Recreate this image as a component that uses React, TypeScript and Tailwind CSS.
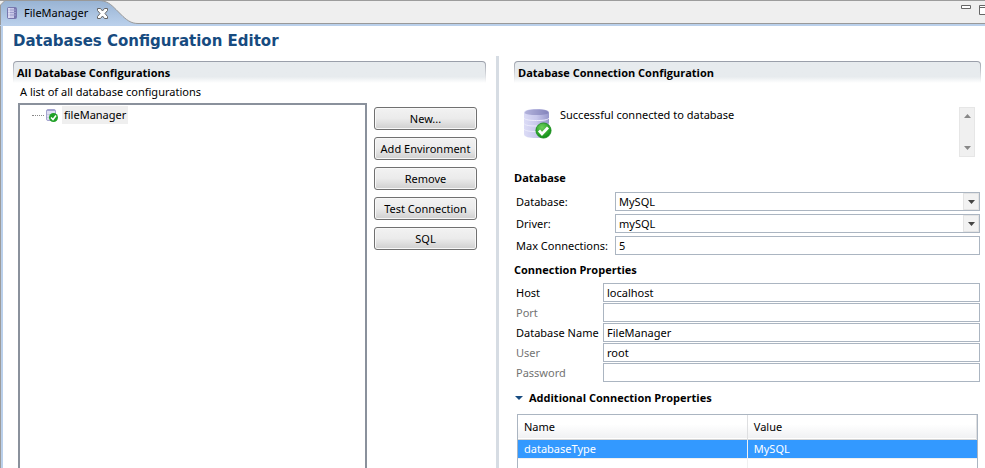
import type { ReactNode } from 'react';
import { useState } from 'react';

function Cylinder({ className, ok }: { className: string; ok?: boolean }) {
  return (
    <svg viewBox="0 0 28 30" className={className} aria-hidden="true">
      <defs>
        <linearGradient id="cyl" x1="0" x2="1" y1="0" y2="0">
          <stop offset="0" stopColor="#dcdcf6" />
          <stop offset="0.5" stopColor="#c8c8ec" />
          <stop offset="1" stopColor="#9898cc" />
        </linearGradient>
        <linearGradient id="lid" x1="0" x2="1" y1="0" y2="0">
          <stop offset="0" stopColor="#b4b4dc" />
          <stop offset="1" stopColor="#8484bc" />
        </linearGradient>
        <radialGradient id="tick" cx="0.4" cy="0.3" r="0.7">
          <stop offset="0" stopColor="#6ed05c" />
          <stop offset="1" stopColor="#0f8f16" />
        </radialGradient>
      </defs>
      <path d="M0 4C0 1 5 0 12.500 0S25 1 25 4v21c0 3-5 4-12.500 4S0 28 0 25Z" fill="url(#cyl)" />
      <path d="M.5 4C1 1.500 5 .5 12.500 .5S24 1.500 24.500 4C23 5.500 19 6 12.500 6S2 5.500 .5 4Z" fill="url(#lid)" />
      <path
        d="M0 9c1 2 6 2.500 12.500 2.500S24 11 25 9M0 14.500c1 2 6 2.500 12.500 2.500S24 16.500 25 14.500M0 20c1 2 6 2.500 12.500 2.500S24 22 25 20"
        fill="none"
        stroke="#ececfc"
        strokeWidth="1"
      />
      {ok && (
        <>
          <circle cx="19.500" cy="21.500" r="7.600" fill="url(#tick)" stroke="#148a18" strokeWidth="0.800" />
          <path d="m15 21.500 3 3.500 6-6.500" fill="none" stroke="#fff" strokeWidth="2.800" />
        </>
      )}
    </svg>
  );
}

function SmallCylinder() {
  return (
    <svg viewBox="0 0 10 12" className="h-3 w-2.5" aria-hidden="true">
      <rect width="10" height="12" rx="2" fill="#7777ae" />
      <rect x="1" y="1" width="6" height="10" fill="#c9c9e8" />
      <path d="M1 3h8M1 5.500h8M1 8h8" stroke="#9c9ccb" />
      <path d="M2 1v10" stroke="#ededfc" />
    </svg>
  );
}

function SmallCylinderOk() {
  return (
    <svg viewBox="0 0 12 13" className="h-[13px] w-3" aria-hidden="true">
      <rect x="0.500" y="0.500" width="9" height="11" rx="1.500" fill="#dedef2" stroke="#a4a4cf" />
      <path d="M1 1.500h8" stroke="#a2a2d0" />
      <path d="M1 5.500h8M1 8.500h8" stroke="#c8c8e4" />
      <circle cx="7.500" cy="8.500" r="4.500" fill="#1fa026" />
      <path d="m5 8.500 2 2 3-4" fill="none" stroke="#fff" strokeWidth="1.500" />
    </svg>
  );
}

function SectionHeader({ children }: { children: ReactNode }) {
  return (
    <div className="h-[22px] rounded-t bg-linear-to-b from-[#989da8] to-white px-px pt-px">
      <h2 className="h-full rounded-t-[3px] bg-linear-to-b from-[#e7ebee] from-70% to-white pl-[3px] font-['Open_Sans','Noto_Sans',sans-serif] leading-[22px] font-bold">
        {children}
      </h2>
    </div>
  );
}

function PushButton({ children }: { children: ReactNode }) {
  return (
    <button
      type="button"
      className="h-[23px] rounded-[3px] border border-[#707070] bg-linear-to-b from-[#f2f2f2] from-0% via-[#ebebeb] via-50% to-[#cfcfcf] text-center leading-5 whitespace-nowrap shadow-[inset_0_0_0_1px_#f8f8f8]"
    >
      {children}
    </button>
  );
}

function Combo({ id, options }: { id: string; options: string[] }) {
  return (
    <div className="relative h-[19px] min-w-0 flex-1">
      <select id={id} className="h-full w-full appearance-none border border-[#abb5c1] bg-white pr-5 pl-[3px] leading-4">
        {options.map((o) => (
          <option key={o}>{o}</option>
        ))}
      </select>
      <span className="pointer-events-none absolute inset-y-px right-px flex w-4 items-center justify-center border border-[#e4e4e4] bg-[#f2f2f2]">
        <svg viewBox="0 0 7 4" className="h-1 w-[7px]">
          <path d="M0 0h7L3.500 4Z" fill="#444" />
        </svg>
      </span>
    </div>
  );
}

const field = 'h-[19px] min-w-0 flex-1 border border-[#abb5c1] bg-white px-[3px] leading-4';

const subheading = "h-5 font-['Open_Sans','Noto_Sans',sans-serif] leading-5 font-bold";

const properties = [
  { id: 'host', label: 'Host', value: 'localhost', required: true },
  { id: 'port', label: 'Port', value: '', required: false },
  { id: 'name', label: 'Database Name', value: 'FileManager', required: true },
  { id: 'user', label: 'User', value: 'root', required: false },
  { id: 'password', label: 'Password', value: '', required: false },
];

function TabBar() {
  return (
    <header className="flex h-[26px] shrink-0 justify-between border-t border-b-2 border-t-[#9c9c9c] border-b-[#bad0eb] bg-[#efefef]">
      <div className="relative flex h-[23px] flex-1 items-start">
        <svg viewBox="0 0 142 25" className="absolute top-[-1px] left-0 h-[25px] w-[142px]" aria-hidden="true">
          <defs>
            <linearGradient id="tab" x1="0" x2="0" y1="0" y2="1">
              <stop offset="0" stopColor="#98b3d3" />
              <stop offset="1" stopColor="#bad0eb" />
            </linearGradient>
          </defs>
          <path d="M.5 25V5L5 .5h93c9 0 13 4 18 9l7 7c5 4.500 9 7 15 7h4V25Z" fill="url(#tab)" />
          <path d="M.5 25V5L5 .5h93c9 0 13 4 18 9l7 7c5 4.500 9 7 15 7h4" fill="none" stroke="#999" />
        </svg>
        <div className="relative flex h-6 w-[140px] items-center pl-[7px]">
          <SmallCylinder />
          <span className="ml-[7px] w-[66px]">FileManager</span>
          <button type="button" aria-label="Close" className="ml-[7px]">
            <svg viewBox="0 0 11 11" className="block size-[11px]">
              <path
                d="M.5.5h3l2 2.500 2-2.500h3v2L8 5.500l2.500 3v2h-3l-2-2.500-2 2.500h-3v-2L3 5.500.5 2.500Z"
                fill="#fff"
                stroke="#666"
              />
            </svg>
          </button>
        </div>
        <div className="h-[23px] flex-1 border-b border-[#999]" />
      </div>
      <div className="flex h-[23px] shrink-0 items-start border-b border-[#999] pt-1">
        <button type="button" aria-label="Minimize" className="mr-2">
          <svg viewBox="0 0 10 4" className="block h-1 w-2.5">
            <path d="M.5.5h9v3h-9Z" fill="#fff" stroke="#666" />
          </svg>
        </button>
        <button type="button" aria-label="Maximize" className="w-[6px] overflow-hidden">
          <svg viewBox="0 0 10 10" className="block h-2.5 w-2.5">
            <path d="M.5.5h9v9h-9ZM.5 2.500h9" fill="#fff" stroke="#666" />
          </svg>
        </button>
      </div>
    </header>
  );
}

export default function App() {
  const [open, setOpen] = useState(true);

  return (
    <div className="flex h-screen flex-col overflow-hidden bg-white font-['Noto_Sans','Open_Sans',sans-serif] text-[11px] leading-4 text-black">
      <TabBar />
      <main className="flex min-h-0 flex-1 flex-col border-l border-[#9c9c9c]">
        <div className="flex min-h-0 flex-1 flex-col border-l-2 border-[#bad0eb]">
          <h1 className="h-[30px] shrink-0 pl-2.5 font-['DejaVu_Sans',sans-serif] text-[15px] leading-[30px] font-bold text-[#174b80]">
            Databases Configuration Editor
          </h1>
          <div className="flex min-h-0 flex-1">
            <section className="flex min-w-0 grow basis-[493px] flex-col px-2.5 pt-[5px]">
              <SectionHeader>All Database Configurations</SectionHeader>
              <p className="h-5 pl-[7px] leading-[18px]">A list of all database configurations</p>
              <div className="flex min-h-0 flex-1 gap-[7px] pr-[9px] pl-[5px]">
                <ul className="min-w-0 flex-1 border-2 border-b-0 border-[#8a919c] pt-px pl-3">
                  <li className="flex h-[18px] items-center">
                    <span className="w-3 border-t border-dotted border-[#888]" />
                    <span className="ml-0.5">
                      <SmallCylinderOk />
                    </span>
                    <span className="ml-1 bg-[#efefef] px-0.5 leading-[18px]">fileManager</span>
                  </li>
                </ul>
                <div className="flex w-[103px] shrink-0 flex-col gap-[7px] pt-1">
                  <PushButton>New...</PushButton>
                  <PushButton>Add Environment</PushButton>
                  <PushButton>Remove</PushButton>
                  <PushButton>Test Connection</PushButton>
                  <PushButton>SQL</PushButton>
                </div>
              </div>
            </section>

            <div className="w-[3px] shrink-0 bg-[#d6dce3]" />

            <section className="min-w-0 grow basis-[486px] pt-[5px] pr-1 pl-[15px]">
              <SectionHeader>Database Connection Configuration</SectionHeader>
              <div className="mt-6 flex h-[50px] pr-1.5 pl-2.5">
                <Cylinder className="mt-0.5 h-[30px] w-7" ok />
                <p className="ml-2 flex-1">Successful connected to database</p>
                <div className="flex w-4 flex-col items-center justify-between border border-[#e6e6e6] bg-[#f0f0f0] py-1.5">
                  <svg viewBox="0 0 7 4" className="h-1 w-[7px]">
                    <path d="M0 4h7L3.500 0Z" fill="#888" />
                  </svg>
                  <svg viewBox="0 0 7 4" className="h-1 w-[7px]">
                    <path d="M0 0h7L3.500 4Z" fill="#888" />
                  </svg>
                </div>
              </div>

              <h3 className={`mt-[11px] ${subheading}`}>Database</h3>
              <div className="mt-1 flex flex-col gap-[3px] pr-px pl-0.5">
                <div className="flex h-[19px]">
                  <label htmlFor="database" className="w-[99px] shrink-0 leading-5">
                    Database:
                  </label>
                  <Combo id="database" options={['MySQL']} />
                </div>
                <div className="flex h-[19px]">
                  <label htmlFor="driver" className="w-[99px] shrink-0 leading-5">
                    Driver:
                  </label>
                  <Combo id="driver" options={['mySQL']} />
                </div>
                <div className="flex h-[19px]">
                  <label htmlFor="max" className="w-[99px] shrink-0 leading-5 whitespace-nowrap">
                    Max Connections:
                  </label>
                  <input id="max" defaultValue="5" className={field} />
                </div>
              </div>

              <h3 className={`mt-[5px] ${subheading}`}>Connection Properties</h3>
              <div className="mt-[3px] flex flex-col gap-px pr-px pl-0.5">
                {properties.map((p) => (
                  <div key={p.id} className="flex h-[19px]">
                    <label
                      htmlFor={p.id}
                      className={`w-[87px] shrink-0 leading-5 whitespace-nowrap ${p.required ? 'text-black' : 'text-[#737373]'}`}
                    >
                      {p.label}
                    </label>
                    <input
                      id={p.id}
                      type={p.id === 'password' ? 'password' : 'text'}
                      defaultValue={p.value}
                      className={field}
                    />
                  </div>
                ))}
              </div>

              <button
                type="button"
                aria-expanded={open}
                onClick={() => setOpen(!open)}
                className={`mt-1.5 flex items-center pl-px ${subheading}`}
              >
                <svg viewBox="0 0 8 4" className="mr-1.5 h-1 w-2">
                  <path d="M0 0h8L4 4Z" fill="#174b80" />
                </svg>
                Additional Connection Properties
              </button>
              {open && (
                <div className="mt-1.5 mr-[3px] ml-[3px] h-20 border border-[#abb5c1]">
                  <table className="w-full table-fixed border-collapse text-left">
                    <thead>
                      <tr className="h-6 border-b border-[#d5d5d5] bg-linear-to-b from-white from-40% to-[#f0f1f3]">
                        <th className="w-1/2 border-r border-[#dedfe1] pl-1.5 font-normal">Name</th>
                        <th className="border-r border-[#dedfe1] pl-1.5 font-normal">Value</th>
                      </tr>
                    </thead>
                    <tbody>
                      <tr className="h-[19px] border-b border-[#f0f0f0] text-white">
                        <td className="border-r border-[#f0f0f0] bg-[#3399ff] pl-1.5">databaseType</td>
                        <td className="bg-[#3399ff] pl-1.5">MySQL</td>
                      </tr>
                      <tr className="h-9">
                        <td className="border-r border-[#f0f0f0]" />
                        <td />
                      </tr>
                    </tbody>
                  </table>
                </div>
              )}
            </section>
          </div>
        </div>
      </main>
    </div>
  );
}
